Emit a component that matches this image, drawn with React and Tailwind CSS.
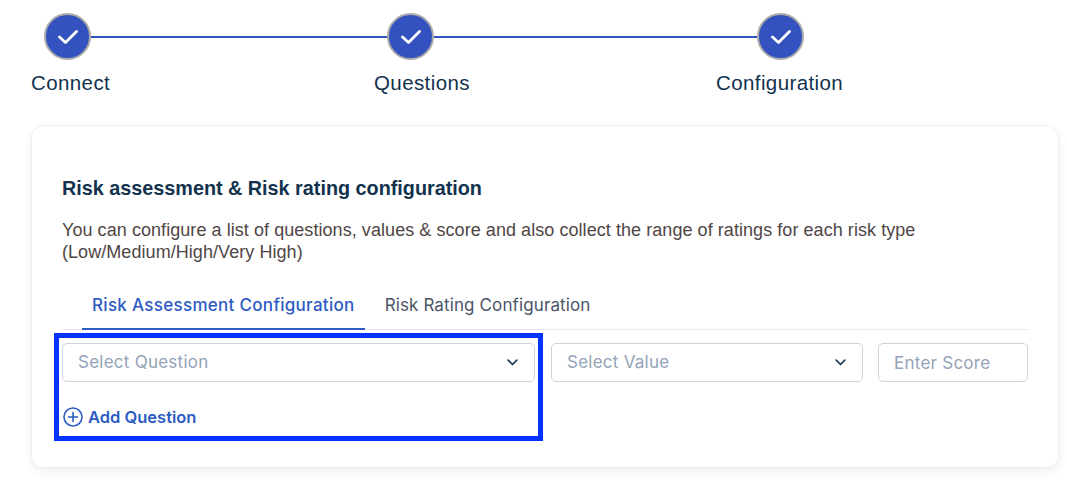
import React from "react";

function Check() {
  return (
    <svg width="20" height="20" viewBox="0 0 20 20" fill="none" stroke="#fff" strokeWidth="2.8" strokeLinecap="round" strokeLinejoin="round">
      <path d="M1.5 10 L7.5 15.5 L18.5 4.5" />
    </svg>
  );
}

function Circle() {
  return (
    <div className="w-[47px] h-[47px] shrink-0 rounded-full bg-[#3352bf] border-2 border-[#a9a9a9] flex items-center justify-center">
      <Check />
    </div>
  );
}

function Chevron() {
  return (
    <svg width="11" height="7" viewBox="0 0 11 7" fill="none" stroke="#1f3a52" strokeWidth="1.7" strokeLinecap="round" strokeLinejoin="round">
      <path d="M1.2 1.2 L5.5 5.5 L9.8 1.2" />
    </svg>
  );
}

function SelectBox({ label, className }) {
  return (
    <div className={"h-[39px] rounded-[5px] border border-[#cbd5e0] bg-white flex items-center justify-between pl-[15px] pr-[16px] " + className}>
      <span className="text-[#94a3b8] text-[17px] tracking-[0.25px] font-['Inter',sans-serif]">{label}</span>
      <Chevron />
    </div>
  );
}

export default function App() {
  return (
    <div className="relative w-[1067px] h-[480px] overflow-hidden bg-white px-[31px] pt-[13px]">
      <div className="flex items-center pl-[13px]">
        <Circle />
        <div className="w-[296px] h-[2px] bg-[#3352bf]" />
        <Circle />
        <div className="w-[323px] h-[2px] bg-[#3352bf]" />
        <Circle />
      </div>
      <div className="flex mt-[8px] h-[30px] items-center text-[#12324d] text-[20.5px] tracking-[0.4px] font-['Liberation_Sans',sans-serif]">
        <span className="w-[343px]">Connect</span>
        <span className="w-[342px]">Questions</span>
        <span>Configuration</span>
      </div>

      <div className="mt-[27px] w-[1028px] h-[343px] rounded-[12px] border border-[#eeeeee] bg-white shadow-[0_4px_10px_rgba(0,0,0,0.06)] px-[30px] pt-[48px]">
        <h1 className="text-[#12324d] text-[19.8px] leading-[28px] font-bold font-['Liberation_Sans',sans-serif]">
          Risk assessment &amp; Risk rating configuration
        </h1>
        <p className="mt-[17px] text-[#4f4646] text-[18px] tracking-[0.06px] leading-[22px] font-['Liberation_Sans',sans-serif]">
          You can configure a list of questions, values &amp; score and also collect the range of ratings for each risk type
          <br />
          (Low/Medium/High/Very High)
        </p>

        <div className="mt-[17px] flex pl-[20px] border-b border-[#e8ebef] h-[50px] font-['Inter',sans-serif] text-[17px]">
          <div className="px-[10px] pt-[3px] h-[50px] flex items-center border-b-2 border-[#2d5bc4] text-[#2d5bc4] font-medium tracking-[0.3px]">
            Risk Assessment Configuration
          </div>
          <div className="px-[20px] pt-[1px] h-[50px] flex items-center text-[#4a5568] tracking-[0.12px]">
            Risk Rating Configuration
          </div>
        </div>

        <div className="mt-[13px] flex">
          <SelectBox label="Select Question" className="w-[473px]" />
          <SelectBox label="Select Value" className="ml-[16px] w-[312px]" />
          <input
            placeholder="Enter Score"
            className="ml-[15px] w-[150px] h-[39px] rounded-[5px] border border-[#cbd5e0] px-[15px] pt-[1px] text-[17px] tracking-[0.25px] font-['Inter',sans-serif] placeholder:text-[#94a3b8] outline-none"
          />
        </div>

        <div className="mt-[23px] flex items-center gap-[5px] text-[#2d5bc4] text-[16.5px] font-semibold font-['Inter',sans-serif]">
          <svg width="20" height="20" viewBox="0 0 20 20" fill="none" stroke="#2d5bc4" strokeWidth="1.6" strokeLinecap="round" className="ml-[1px]">
            <circle cx="10" cy="10" r="9" />
            <path d="M10 5.5 V14.5 M5.5 10 H14.5" />
          </svg>
          <span>Add Question</span>
        </div>
      </div>

      <div className="absolute left-[54px] top-[333px] w-[489px] h-[108px] border-[5px] border-[#0433ff] pointer-events-none" />
    </div>
  );
}
